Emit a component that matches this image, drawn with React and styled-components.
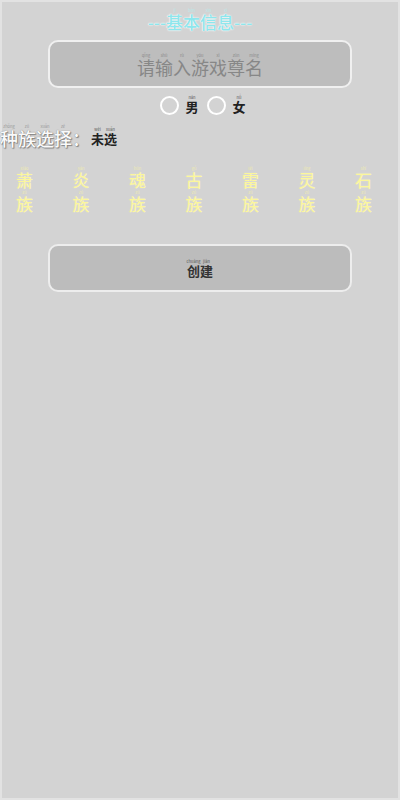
import React, { useState } from 'react';
import styled, { createGlobalStyle } from 'styled-components';

const GlobalStyle = createGlobalStyle`
  html, body {
    margin: 0;
    padding: 0;
    background: #d3d3d3;
  }
  * {
    box-sizing: border-box;
  }
`;

const Page = styled.div`
  width: 400px;
  min-height: 800px;
  border: 2px solid #e2e2e2;
  background: #d3d3d3;
  font-family: "Noto Sans CJK SC", "Noto Sans", sans-serif;
  display: flex;
  flex-direction: column;
  align-items: center;
`;

// a hanzi with its tiny pinyin sitting on top
const Glyph = styled.span`
  display: inline-flex;
  flex-direction: column;
  align-items: center;
  width: 1em;
`;

const Pinyin = styled.span`
  display: block;
  font-size: 4px;
  line-height: 6px;
  height: 6px;
  white-space: nowrap;
  color: ${(p) => p.$color || '#8a8a8a'};
  text-shadow: none;
  font-weight: 400;
`;

const Han = styled.span`
  display: block;
  line-height: ${(p) => p.$lh || '1.05em'};
`;

const Title = styled.div`
  margin-top: 5px;
  display: flex;
  align-items: flex-end;
  font-size: 17px;
  font-weight: 500;
  color: #8ee6ec;
  text-shadow: 0 0 2px #ffffff, 0 0 1px #ffffff;
`;

const Dashes = styled.span`
  line-height: 18px;
`;

const NameBox = styled.div`
  margin-top: 9px;
  width: 304px;
  height: 48px;
  border: 2px solid #f0f0f0;
  border-radius: 10px;
  background: #bdbdbd;
  display: flex;
  align-items: center;
  justify-content: center;
  font-size: 18px;
  color: #878787;
`;

const GenderRow = styled.div`
  margin-top: 4px;
  margin-left: 5px;
  height: 26px;
  display: flex;
  align-items: center;
`;

const Radio = styled.span`
  width: 19px;
  height: 19px;
  border-radius: 50%;
  border: 2px solid #ffffff;
  margin: 0 7px 0 ${(p) => p.$gap || 0}px;
`;

const GenderLabel = styled.span`
  display: flex;
  font-size: 13px;
  font-weight: 700;
  color: #222;
  margin-bottom: 2px;
`;

const RaceHeader = styled.div`
  align-self: stretch;
  margin-top: 6px;
  margin-left: -2px;
  display: flex;
  align-items: flex-end;
  gap: 1px;
  height: 24px;
`;

const RaceLabel = styled.span`
  display: flex;
  align-items: flex-end;
  font-size: 18px;
  font-weight: 500;
  color: #fafafa;
  text-shadow: 0 0 1px #6f6f6f, 1px 1px 1px #858585;
`;

const Colon = styled.span`
  line-height: 19px;
`;

const RaceValue = styled.span`
  display: flex;
  font-size: 13px;
  font-weight: 700;
  color: #222;
  margin-bottom: 2px;
`;

const RaceGrid = styled.div`
  align-self: stretch;
  margin-top: 17px;
  padding: 0 26px 0 14px;
  display: flex;
  justify-content: space-between;
`;

const RaceItem = styled.div`
  display: flex;
  flex-direction: column;
  align-items: center;
  font-size: 17px;
  color: #fbf69c;
  cursor: pointer;
  text-shadow: ${(p) => (p.$active ? '0 0 4px #ffffff' : '0 0 1px #f4f1d0')};
`;

const CreateButton = styled.button`
  margin-top: 31px;
  width: 304px;
  height: 48px;
  border: 2px solid #ededed;
  border-radius: 10px;
  background: #bcbcbc;
  font-family: inherit;
  font-size: 13px;
  font-weight: 700;
  color: #333;
  display: flex;
  align-items: center;
  justify-content: center;
  padding: 0;
`;

function Annotated({ chars, color, lh }) {
  return chars.map(([c, py], i) => (
    <Glyph key={i}>
      <Pinyin $color={color}>{py}</Pinyin>
      <Han $lh={lh}>{c}</Han>
    </Glyph>
  ));
}

const races = [
  ['萧', 'xiāo'],
  ['炎', 'yán'],
  ['魂', 'hún'],
  ['古', 'gǔ'],
  ['雷', 'léi'],
  ['灵', 'líng'],
  ['石', 'shí'],
];

function App() {
  const [race, setRace] = useState(null);

  return (
    <Page>
      <GlobalStyle />
      <Title>
        <Dashes>---</Dashes>
        <Annotated
          color="#b9e9ea"
          lh="18px"
          chars={[['基', 'jī'], ['本', 'běn'], ['信', 'xìn'], ['息', 'xī']]}
        />
        <Dashes>---</Dashes>
      </Title>
      <NameBox>
        <Annotated
          chars={[
            ['请', 'qǐng'], ['输', 'shū'], ['入', 'rù'], ['游', 'yóu'],
            ['戏', 'xì'], ['尊', 'zūn'], ['名', 'míng'],
          ]}
        />
      </NameBox>
      <GenderRow>
        <Radio />
        <GenderLabel>
          <Annotated color="#555" chars={[['男', 'nán']]} />
        </GenderLabel>
        <Radio $gap={8} />
        <GenderLabel>
          <Annotated color="#555" chars={[['女', 'nǚ']]} />
        </GenderLabel>
      </GenderRow>
      <RaceHeader>
        <RaceLabel>
          <Annotated
            color="#999"
            lh="19px"
            chars={[['种', 'zhǒng'], ['族', 'zú'], ['选', 'xuǎn'], ['择', 'zé']]}
          />
          <Colon>：</Colon>
        </RaceLabel>
        <RaceValue>
          <Annotated
            color="#555"
            chars={race ? [race, ['族', 'zú']] : [['未', 'wèi'], ['选', 'xuǎn']]}
          />
        </RaceValue>
      </RaceHeader>
      <RaceGrid>
        {races.map((r) => (
          <RaceItem
            key={r[0]}
            $active={race && race[0] === r[0]}
            onClick={() => setRace(r)}
          >
            <Annotated color="#eeeab0" lh="18px" chars={[r, ['族', 'zú']]} />
          </RaceItem>
        ))}
      </RaceGrid>
      <CreateButton>
        <Annotated color="#555" chars={[['创', 'chuàng'], ['建', 'jiàn']]} />
      </CreateButton>
    </Page>
  );
}

export default App;
